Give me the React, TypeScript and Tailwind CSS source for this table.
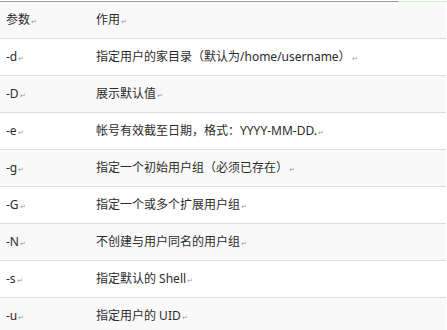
const rows: [string, string][] = [
  ["-d", "指定用户的家目录（默认为/home/username）"],
  ["-D", "展示默认值"],
  ["-e", "帐号有效截至日期，格式：YYYY-MM-DD."],
  ["-g", "指定一个初始用户组（必须已存在）"],
  ["-G", "指定一个或多个扩展用户组"],
  ["-N", "不创建与用户同名的用户组"],
  ["-s", "指定默认的 Shell"],
  ["-u", "指定用户的 UID"],
];

function Mark() {
  return <span className="ml-px text-[7px] text-[#9a9a9a] align-baseline">↵</span>;
}

export default function App() {
  return (
    <div
      className="w-[447px] h-[330px] overflow-hidden bg-white pt-px text-[12px] text-[#2b2b2b]"
      style={{ fontFamily: '"Noto Sans", "Noto Sans CJK SC", sans-serif' }}
    >
      <div className="flex h-px">
        <div className="w-[398px] bg-[#9a9a9a]" />
        <div className="flex-1 bg-[#d6e8d3]" />
      </div>
      <div className="w-[446px]">
        <div className="flex items-center h-[37px] bg-[#f9f9f9] border-b border-[#dddddd]">
          <div className="w-[96px] pl-[6px]">参数<Mark /></div>
          <div>作用<Mark /></div>
        </div>
        {rows.map(([k, v], i) => (
          <div
            key={k}
            className={`flex items-center h-[37px] border-b border-[#dddddd] ${i % 2 === 0 ? "bg-white" : "bg-[#f9f9f9]"}`}
          >
            <div className="w-[96px] pl-[6px]">{k}<Mark /></div>
            <div>{v}<Mark /></div>
          </div>
        ))}
      </div>
    </div>
  );
}
